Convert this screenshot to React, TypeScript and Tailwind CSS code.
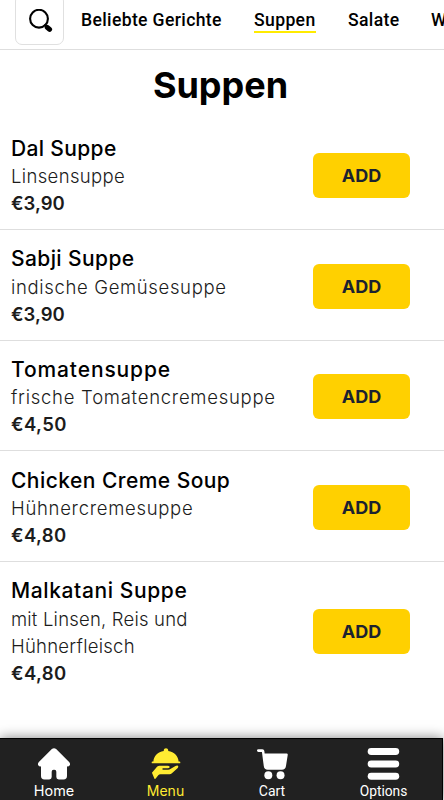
interface DishLine {
  text: string;
  className: string;
}

interface Dish {
  name: DishLine;
  description: DishLine[];
  price: DishLine;
}

interface NavItemProps {
  label: string;
  className: string;
  children: React.ReactNode;
}

const dishes: Dish[] = [
  {
    name: { text: "Dal Suppe", className: "tracking-[0.35px]" },
    description: [{ text: "Linsensuppe", className: "tracking-[0.35px]" }],
    price: { text: "€3,90", className: "tracking-normal" },
  },
  {
    name: { text: "Sabji Suppe", className: "tracking-[0.4px]" },
    description: [{ text: "indische Gemüsesuppe", className: "tracking-[0.65px]" }],
    price: { text: "€3,90", className: "tracking-normal" },
  },
  {
    name: { text: "Tomatensuppe", className: "tracking-[0.88px]" },
    description: [{ text: "frische Tomatencremesuppe", className: "tracking-[0.73px]" }],
    price: { text: "€4,50", className: "tracking-[0.4px]" },
  },
  {
    name: { text: "Chicken Creme Soup", className: "tracking-[0.45px]" },
    description: [{ text: "Hühnercremesuppe", className: "tracking-[0.7px]" }],
    price: { text: "€4,80", className: "tracking-[0.4px]" },
  },
  {
    name: { text: "Malkatani Suppe", className: "tracking-[0.61px]" },
    description: [
      { text: "mit Linsen, Reis und", className: "tracking-[0.2px]" },
      { text: "Hühnerfleisch", className: "tracking-[0.25px]" },
    ],
    price: { text: "€4,80", className: "tracking-[0.4px]" },
  },
]

function SearchIcon() {
  return (
    <svg className="mt-[3px] ml-[3px]" width="24" height="24" viewBox="0 0 24 24" fill="none" stroke="black" strokeLinecap="round">
      <circle cx="10" cy="9.700" r="8.900" strokeWidth="2.100" />
      <path d="m16.200 16 1.500 1.500" strokeWidth="2.100" />
      <path d="m18.200 18.300 2.400 2.100" strokeWidth="5" />
    </svg>
  )
}

function CategoryBar() {
  return (
    <header className="flex h-[50px] shrink-0 items-start overflow-hidden border-b border-[#dedede] pl-[15px]">
      <button className="-mt-[6px] mr-[17px] flex h-[51px] w-[49px] shrink-0 items-center justify-center rounded-[7px] border border-[#e0e0e0]">
        <SearchIcon />
      </button>
      <nav className="flex shrink-0 gap-8 pt-[9px] font-[Roboto] text-[17.6px] leading-[22px] font-medium tracking-[0.35px] whitespace-nowrap">
        <a className="w-[141px]">Beliebte Gerichte</a>
        <a className="w-[62px] border-b-2 border-[#ffeb00]">Suppen</a>
        <a className="w-[51px]">Salate</a>
        <a>W</a>
      </nav>
    </header>
  )
}

function DishRow({ name, description, price }: Dish) {
  return (
    <li className="flex items-center justify-between border-b border-[#dedede] pt-[14.3px] pr-[34px] pb-[12px] pl-[11px] last:border-b-0">
      <div className="whitespace-nowrap">
        <h2 className={`text-[21px] leading-[29.3px] font-medium ${name.className}`}>{name.text}</h2>
        {description.map((line) => (
          <p key={line.text} className={`text-[18.5px] leading-[27px] font-light text-[#1c1c1c] ${line.className}`}>{line.text}</p>
        ))}
        <p className={`text-[18.5px] leading-[27px] font-semibold text-[#1c1c1c] ${price.className}`}>{price.text}</p>
      </div>
      <button className="h-[45px] w-[97px] shrink-0 rounded-md bg-[#ffd000] text-[18px] font-bold text-[#1b2230]">ADD</button>
    </li>
  )
}

function NavItem({ label, className, children }: NavItemProps) {
  return (
    <a className={`flex shrink-0 flex-col items-center gap-[2px] ${className}`}>
      {children}
      <span className="leading-[18px] whitespace-nowrap">{label}</span>
    </a>
  )
}

function BottomNav() {
  return (
    <footer className="flex h-[62px] w-[443px] shrink-0 border-t border-r border-black bg-[#212121] pt-[9px] text-white shadow-[0_0_12px_rgba(0,0,0,0.5)]">
      <NavItem label="Home" className="w-[108px] font-[Inter,sans-serif] text-[14.4px]">
        <svg width="34" height="33" viewBox="0 0 34 33" fill="currentColor">
          <path d="M14.8 1q2.2-1.5 4.4 0L32.6 14.5q1.3 1.3.8 3-.6 1.7-3 1.7V29q0 3.500-3.500 3.500h-5q-2.500 0-2.500-2.500v-5.500q0-2-2-2h-.8q-2 0-2 2V30q0 2.500-2.500 2.500h-5Q3.600 32.500 3.600 29v-9.800q-2.400 0-3-1.700-.5-1.700.8-3Z" />
        </svg>
      </NavItem>
      <NavItem label="Menu" className="w-[115px] font-[Inter,sans-serif] text-[14px] text-[#ffeb32]">
        <svg width="30" height="33" viewBox="0 0 30 33" fill="currentColor">
          <path d="M2 14C2.400 8 6.500 3.800 12.700 3c-.3-3.600 4.900-3.600 4.600 0C23.500 3.800 27.600 8 28 14h1q.8 0 .8.900t-.8.900H1q-.8 0-.8-.9T1 14Z" />
          <path d="M.5 25.500 6 19.200q1-1 2.500-1h8q2.300 0 2.300 1.300 0 1.500-2.300 1.500H12q-.8 0-.8.700t.8.700h5.200q1.300 0 2.300-.8l5.300-3q1.500-.9 2.500-.3 1 .9-.2 2.200l-6 5.600q-1 1-2.500 1H9.200q-1.300 0-2.200.9L4.400 31.500q-.8.900-1.400-.1Z" />
        </svg>
      </NavItem>
      <NavItem label="Cart" className="w-[98px] font-[Roboto] text-[14px]">
        <svg width="33" height="33" viewBox="0 0 33 33" fill="currentColor">
          <path d="M2 1.200h4q1.900 0 2.100 1.900l.3 2.700h22.700q1.300 0 1.100 1.300l-1.800 11.500q-.6 3.900-4.200 3.900H11.500q-3.500 0-4-3.900L5.600 4.200H2Q.5 4.200.5 2.700T2 1.200Z" />
          <circle cx="12.200" cy="28" r="4.100" />
          <circle cx="24.800" cy="28" r="4.100" />
        </svg>
      </NavItem>
      <NavItem label="Options" className="w-[121px] pl-[4px] font-[Roboto] text-[13.8px]">
        <svg width="33" height="33" viewBox="0 0 33 33" fill="currentColor">
          <rect x=".2" y="0" width="32.500" height="7.200" rx="3.600" />
          <rect x=".2" y="12.800" width="32.500" height="7.200" rx="3.600" />
          <rect x=".2" y="25.600" width="32.500" height="7.200" rx="3.600" />
        </svg>
      </NavItem>
    </footer>
  )
}

export default function App() {
  return (
    <div className="flex h-[800px] w-[444px] flex-col overflow-hidden bg-white font-[Inter,sans-serif] text-black">
      <CategoryBar />
      <main className="flex-1">
        <h1 className="flex h-[69.6px] items-center justify-center pt-[1px] pr-[3px] text-[36px] font-bold">Suppen</h1>
        <ul>
          {dishes.map((dish) => (
            <DishRow key={dish.name.text} {...dish} />
          ))}
        </ul>
      </main>
      <BottomNav />
    </div>
  )
}
